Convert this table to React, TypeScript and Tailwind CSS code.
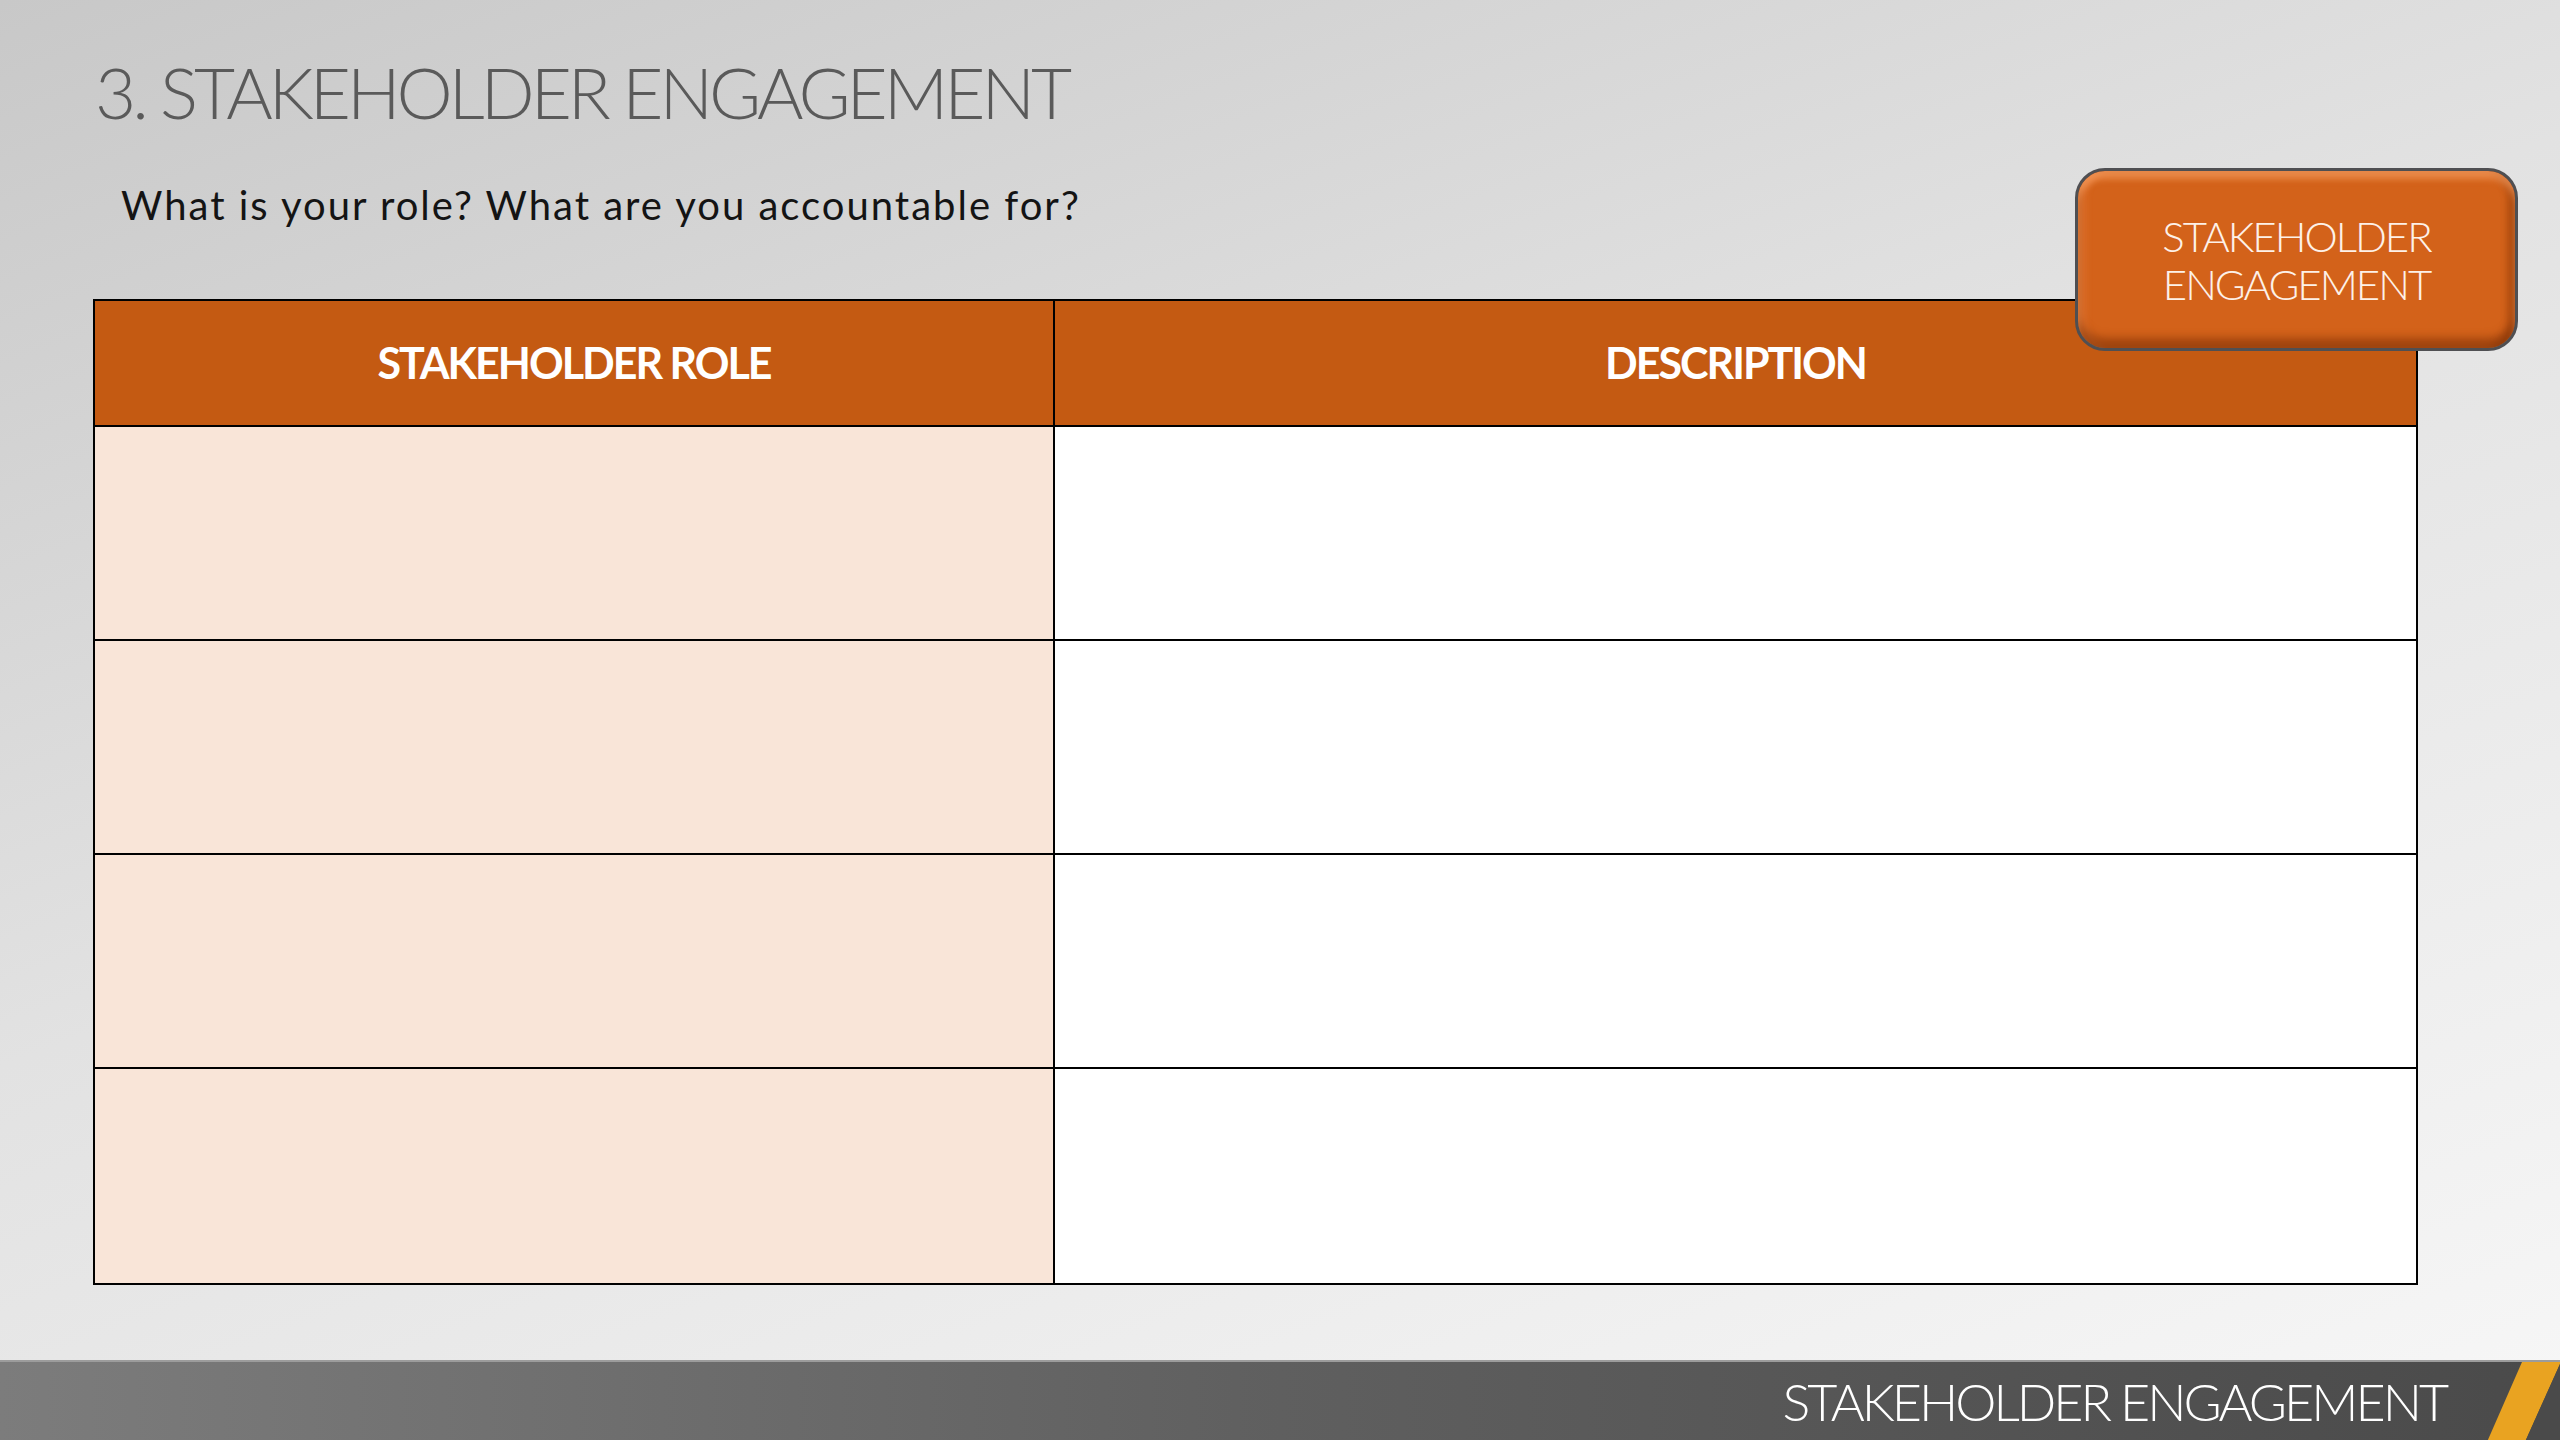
const rows = [0, 1, 2, 3];

function Badge() {
  return (
    <div className="absolute left-[2075px] top-[168px] w-[443px] h-[183px] rounded-[30px] border-[3px] border-[#4f4f52] bg-[#d3621a] shadow-[inset_0_8px_6px_rgba(255,170,110,0.55),inset_0_-10px_8px_rgba(120,45,5,0.55),inset_8px_0_6px_rgba(255,160,100,0.25),inset_-8px_0_6px_rgba(120,45,5,0.35)] flex flex-col items-center justify-center">
      <span className="text-[42px] leading-[48px] font-light text-[#fdf1e8] tracking-[-2px]">STAKEHOLDER</span>
      <span className="text-[42px] leading-[48px] font-light text-[#fdf1e8] tracking-[-2px]">ENGAGEMENT</span>
    </div>
  );
}

export default function App() {
  return (
    <div className="w-[2560px] h-[1440px] flex flex-col overflow-hidden font-['Lato','Liberation_Sans',sans-serif] bg-[linear-gradient(160deg,#c8c8c8_0%,#e2e2e2_45%,#f7f7f7_100%)]">
      <main className="relative flex-1 flex flex-col pl-[93px]">
        <h1 className="mt-[52px] ml-[2px] text-[71px] leading-[80px] font-light text-[#5a5a5a] tracking-[-4px]">
          3. STAKEHOLDER ENGAGEMENT
        </h1>
        <p className="mt-[49px] ml-[28px] text-[40px] leading-[48px] text-[#141414] tracking-[2px]">
          What is your role? What are you accountable for?
        </p>

        <div className="mt-[70px] w-[2325px] border-2 border-black grid grid-cols-[960px_1fr]">
          <div className="h-[126px] bg-[#c45a12] border-r-2 border-b-2 border-black flex items-center justify-center">
            <span className="text-[43px] font-bold text-white tracking-[-2px]">STAKEHOLDER ROLE</span>
          </div>
          <div className="h-[126px] bg-[#c45a12] border-b-2 border-black flex items-center justify-center">
            <span className="text-[43px] font-bold text-white tracking-[-2px]">DESCRIPTION</span>
          </div>
          {rows.map((r) => (
            <div key={r} className="contents">
              <div className={`h-[214px] bg-[#f9e5d8] border-r-2 border-black ${r < 3 ? "border-b-2" : ""}`} />
              <div className={`h-[214px] bg-white border-black ${r < 3 ? "border-b-2" : ""}`} />
            </div>
          ))}
        </div>

        <Badge />
      </main>

      <footer className="relative h-[80px] shrink-0 border-t-2 border-[#9c9c9c] bg-[linear-gradient(90deg,#7c7c7c_0%,#5f5f5f_50%,#4a4a4a_100%)] flex items-center justify-end pr-[114px]">
        <span className="text-[52px] leading-[60px] font-light text-white tracking-[-3px]">STAKEHOLDER ENGAGEMENT</span>
        <svg className="absolute right-0 top-0" width="90" height="80" viewBox="0 0 90 80">
          <polygon points="52,0 90,0 90,2 55,80 17,80" fill="#e9a321" />
          <polygon points="90,2 90,80 55,80" fill="#4a4a4a" />
        </svg>
      </footer>
    </div>
  );
}
